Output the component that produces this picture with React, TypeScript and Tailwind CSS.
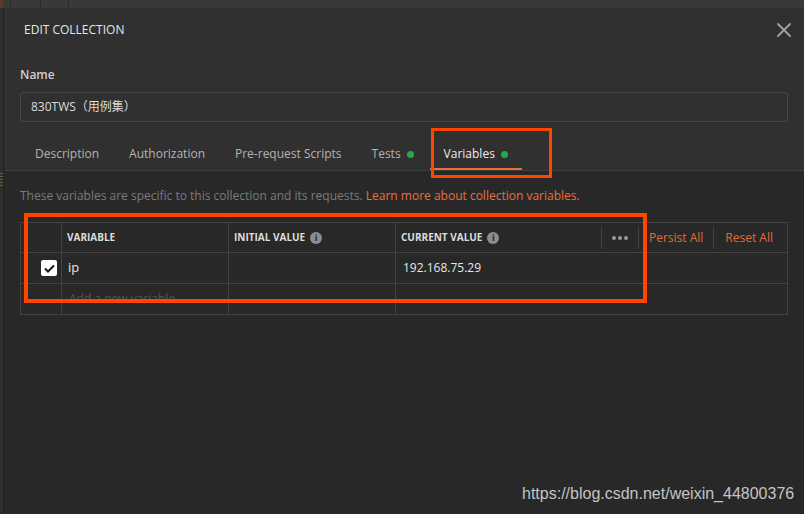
import React from "react";

const tabs = [
  { label: "Description", dot: false },
  { label: "Authorization", dot: false },
  { label: "Pre-request Scripts", dot: false },
  { label: "Tests", dot: true },
  { label: "Variables", dot: true, active: true },
];

function InfoIcon() {
  return (
    <span className="ml-[5px] inline-flex h-[12px] w-[12px] items-center justify-center rounded-full bg-[#8c8c8c] text-[9px] font-bold leading-none text-[#2a2a2a]">
      i
    </span>
  );
}

function CloseIcon() {
  return (
    <svg width="14" height="14" viewBox="0 0 14 14" className="text-[#a3a3a3]">
      <path d="M1 1 L13 13 M13 1 L1 13" stroke="currentColor" strokeWidth="1.8" strokeLinecap="round" />
    </svg>
  );
}

export default function App() {
  return (
    <div className="relative h-[514px] w-[804px] overflow-hidden bg-[#282828] font-['Open_Sans','Noto_Sans_CJK_SC',sans-serif]">
      {/* app behind the modal */}
      <div className="flex h-[8px] bg-[#393939]">
        <div className="w-[3px] bg-[#5a3a2c]" />
        <div className="ml-[7px] w-px bg-[#2c2c2c]" />
        <div className="ml-[29px] w-px bg-[#2c2c2c]" />
        <div className="ml-[27px] w-px bg-[#2c2c2c]" />
      </div>

      <div className="flex h-[506px]">
        <div className="flex w-[4px] flex-col border-r border-[#1f1f1f] bg-[#2e2e2e]">
          <div className="mt-[165px] flex flex-col gap-[2px]">
            <div className="h-px bg-[#4f6b3f]" />
            <div className="h-px bg-[#4f6b3f]" />
            <div className="h-px bg-[#4f6b3f]" />
            <div className="h-px bg-[#4f6b3f]" />
            <div className="h-px bg-[#4f6b3f]" />
          </div>
        </div>

        {/* modal */}
        <div className="flex flex-1 flex-col">
          <div className="bg-[#303030] pt-[14px]">
            <div className="flex items-center justify-between pl-[20px] pr-[13px]">
              <h1 className="text-[12px] leading-[16px] text-[#e6e6e6]">EDIT COLLECTION</h1>
              <CloseIcon />
            </div>

            <div className="mt-[29px] pl-[16px] text-[12px] font-semibold leading-[16px] text-[#cfcfcf]">Name</div>
            <div className="ml-[16px] mr-[16px] mt-[9px] flex h-[30px] items-center rounded-[3px] border border-[#474747] pl-[10px] text-[12px] text-[#dcdcdc]">
              830TWS（用例集）
            </div>

            <div className="mt-[16px] flex border-b border-[#3d3d3d] pl-[17px]">
              {tabs.map((t) => (
                <div
                  key={t.label}
                  className={
                    t.active
                      ? "mr-[2px] flex h-[32px] items-center border-b-2 border-[#ec6e3d] px-[14px] pt-[2px] text-[12px] text-[#ececec]"
                      : "mr-[2px] flex h-[32px] items-center px-[14px] text-[12px] text-[#b3b3b3]"
                  }
                >
                  {t.label}
                  {t.dot && <span className="ml-[6px] h-[7px] w-[7px] rounded-full bg-[#26a84a]" />}
                </div>
              ))}
            </div>
          </div>

          <div className="flex-1 bg-[#282828] px-[16px]">
            <p className="mt-[17px] text-[12px] leading-[16px] text-[#7b7b7b]">
              These variables are specific to this collection and its requests.{" "}
              <span className="text-[#ec6e3d]">Learn more about collection variables.</span>
            </p>

            <div className="mt-[18px] border border-[#424242] text-[12px]">
              {/* header */}
              <div className="flex h-[30px] border-b border-[#424242] text-[10px] font-bold text-[#dddddd]">
                <div className="w-[41px] border-r border-[#424242]" />
                <div className="flex w-[167px] items-center border-r border-[#424242] pl-[5px]">VARIABLE</div>
                <div className="flex w-[167px] items-center border-r border-[#424242] pl-[5px]">
                  INITIAL VALUE
                  <InfoIcon />
                </div>
                <div className="flex flex-1 items-center pl-[5px]">
                  CURRENT VALUE
                  <InfoIcon />
                  <div className="ml-auto flex items-center text-[12px] font-normal text-[#e26a3a]">
                    <div className="h-[22px] w-px bg-[#424242]" />
                    <div className="flex w-[36px] items-center justify-center gap-[2px]">
                      <span className="h-[4px] w-[4px] rounded-full bg-[#9a9a9a]" />
                      <span className="h-[4px] w-[4px] rounded-full bg-[#9a9a9a]" />
                      <span className="h-[4px] w-[4px] rounded-full bg-[#9a9a9a]" />
                    </div>
                    <div className="h-[22px] w-px bg-[#424242]" />
                    <span className="px-[10px]">Persist All</span>
                    <div className="h-[22px] w-px bg-[#424242]" />
                    <span className="pl-[11px] pr-[14px]">Reset All</span>
                  </div>
                </div>
              </div>

              {/* row */}
              <div className="flex h-[31px] border-b border-[#424242]">
                <div className="flex w-[41px] items-center justify-end border-r border-[#424242] pr-[4px]">
                  <span className="flex h-[16px] w-[16px] items-center justify-center rounded-[2px] bg-white">
                    <svg width="11" height="9" viewBox="0 0 11 9">
                      <path d="M1 4.5 L4 7.5 L10 1.5" fill="none" stroke="#1a1a1a" strokeWidth="2" />
                    </svg>
                  </span>
                </div>
                <div className="flex w-[167px] items-center border-r border-[#424242] pl-[6px] text-[13px] text-[#e6e6e6]">ip</div>
                <div className="w-[167px] border-r border-[#424242]" />
                <div className="flex flex-1 items-center pl-[7px] text-[#e6e6e6]">192.168.75.29</div>
              </div>

              {/* new */}
              <div className="flex h-[30px]">
                <div className="w-[41px] border-r border-[#424242]" />
                <div className="flex w-[167px] items-center border-r border-[#424242] pl-[7px] text-[#555555]">Add a new variable</div>
                <div className="w-[167px] border-r border-[#424242]" />
                <div className="flex-1" />
              </div>
            </div>
          </div>
        </div>
      </div>

      {/* annotation boxes */}
      <div className="absolute left-[431px] top-[128px] h-[50px] w-[121px] border-[3px] border-[#ff4500]" />
      <div className="absolute left-[24px] top-[213px] h-[90px] w-[623px] border-[4px] border-[#ff4500]" />

      {/* watermark */}
      <div className="absolute left-[522px] top-[484px] font-['Liberation_Sans',Arial,sans-serif] text-[16px] leading-[20px] text-[#c4c4c4]">
        https://blog.csdn.net/weixin_44800376
      </div>
    </div>
  );
}
